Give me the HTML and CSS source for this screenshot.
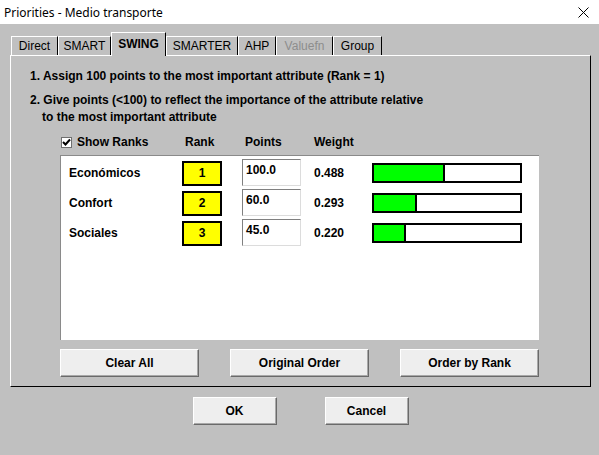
FILE: index.html
```html
<!DOCTYPE html>
<html>
<head>
<meta charset="utf-8">
<title>Priorities - Medio transporte</title>
<link rel="stylesheet" href="styles.css">
</head>
<body>
<div class="window">
  <div class="titlebar">
    <span class="title">Priorities - Medio transporte</span>
    <svg class="close" width="11" height="11" viewBox="0 0 11 11"><path d="M0.5 0.5 L10.5 10.5 M10.5 0.5 L0.5 10.5" stroke="#000" stroke-width="1" fill="none"/></svg>
  </div>
  <div class="main">
    <div class="tabs">
      <div class="tab t-direct">Direct</div>
      <div class="tab t-smart">SMART</div>
      <div class="tab t-swing selected">SWING</div>
      <div class="tab t-smarter">SMARTER</div>
      <div class="tab t-ahp">AHP</div>
      <div class="tab t-valuefn disabled">Valuefn</div>
      <div class="tab t-group">Group</div>
    </div>
    <div class="panel">
      <div class="instr l1">1. Assign 100 points to the most important attribute (Rank = 1)</div>
      <div class="instr l2">2. Give points (&lt;100) to reflect the importance of the attribute relative</div>
      <div class="instr l3">to the most important attribute</div>
      <div class="header">
        <label class="showranks"><span class="check"><svg width="9" height="9" viewBox="0 0 9 9"><path d="M1 4 L3.5 6.5 L8 1.5" stroke="#000" stroke-width="2" fill="none"/></svg></span>Show Ranks</label>
        <span class="h-rank">Rank</span>
        <span class="h-points">Points</span>
        <span class="h-weight">Weight</span>
      </div>
      <div class="list">
        <div class="row">
          <span class="name">Económicos</span>
          <span class="rank">1</span>
          <span class="points">100.0</span>
          <span class="weight">0.488</span>
          <span class="bar"><span class="fill" style="width:48.8%"></span></span>
        </div>
        <div class="row">
          <span class="name">Confort</span>
          <span class="rank">2</span>
          <span class="points">60.0</span>
          <span class="weight">0.293</span>
          <span class="bar"><span class="fill" style="width:29.3%"></span></span>
        </div>
        <div class="row">
          <span class="name">Sociales</span>
          <span class="rank">3</span>
          <span class="points">45.0</span>
          <span class="weight">0.220</span>
          <span class="bar"><span class="fill" style="width:22%"></span></span>
        </div>
      </div>
      <div class="actions">
        <button class="btn wide">Clear All</button>
        <button class="btn wide">Original Order</button>
        <button class="btn wide">Order by Rank</button>
      </div>
    </div>
    <div class="footer">
      <button class="btn small">OK</button>
      <button class="btn small">Cancel</button>
    </div>
  </div>
</div>
</body>
</html>
```
FILE: styles.css
```css
html, body {
  margin: 0;
  padding: 0;
  width: 599px;
  height: 455px;
  overflow: hidden;
  background: #c0c0c0;
  font-family: "Liberation Sans", Arial, sans-serif;
  font-size: 12px;
  color: #000;
}

.window {
  width: 599px;
  height: 455px;
}

.titlebar {
  height: 24px;
  background: #fff;
  display: flex;
  align-items: center;
  justify-content: space-between;
  padding: 0 10px 0 4px;
}

.title {
  font-family: "Noto Sans", sans-serif;
  font-size: 12px;
  color: #000;
}

.close {
  display: block;
}

.main {
  padding: 8px 8px 0 10px;
}

.tabs {
  display: flex;
  align-items: flex-end;
  height: 23px;
  padding-left: 1px;
}

.tab {
  box-sizing: border-box;
  height: 19px;
  border-top: 1px solid #fff;
  border-left: 1px solid #fff;
  border-right: 1px solid #000;
  display: flex;
  align-items: center;
  justify-content: center;
  background: #c0c0c0;
  white-space: nowrap;
}

.tab.selected {
  height: 24px;
  margin-bottom: -1px;
  font-weight: bold;
  position: relative;
  z-index: 2;
  padding-bottom: 2px;
}

.tab.disabled {
  color: #8d8d8d;
}

.t-direct { width: 47px; }
.t-smart { width: 53px; }
.t-swing { width: 55px; }
.t-smarter { width: 72px; }
.t-ahp { width: 38px; }
.t-valuefn { width: 57px; }
.t-group { width: 49px; }

.panel {
  box-sizing: border-box;
  width: 581px;
  height: 332px;
  border-top: 1px solid #fff;
  border-left: 1px solid #fff;
  border-right: 1px solid #000;
  border-bottom: 1px solid #000;
  padding-top: 12px;
  font-weight: bold;
}

.instr {
  line-height: 17px;
  padding-left: 19px;
  white-space: nowrap;
}

.l1 {
  margin-bottom: 7px;
}

.l3 {
  padding-left: 31px;
}

.header {
  margin-top: 8px;
  height: 17px;
  line-height: 17px;
  padding-left: 50px;
  display: grid;
  grid-template-columns: 121px 60px 72px 80px;
}

.showranks {
  display: flex;
  align-items: center;
}

.check {
  box-sizing: border-box;
  width: 11px;
  height: 11px;
  background: #fff;
  border: 1px solid #6f6f6f;
  margin-right: 5px;
  display: flex;
  align-items: center;
  justify-content: center;
}

.check svg {
  display: block;
}

.h-rank, .h-points {
  padding-left: 3px;
}

.list {
  box-sizing: border-box;
  margin: 4px 0 0 49px;
  width: 479px;
  height: 185px;
  background: #fff;
  border-top: 1px solid #8a8a8a;
  border-left: 1px solid #8a8a8a;
  padding: 2px 0 0 8px;
}

.row {
  height: 30px;
  display: grid;
  grid-template-columns: 113px 60px 72px 58px 150px;
  align-items: center;
  line-height: 17px;
}

.rank {
  box-sizing: border-box;
  width: 40px;
  height: 25px;
  background: #ffff00;
  border: 2px solid #000;
  display: flex;
  align-items: center;
  justify-content: center;
  padding-top: 1px;
}

.points {
  box-sizing: border-box;
  width: 59px;
  height: 27px;
  border-top: 1px solid #808080;
  border-left: 1px solid #808080;
  border-right: 1px solid #dcdcdc;
  border-bottom: 1px solid #dcdcdc;
  padding: 2px 3px 0;
  background: #fff;
  margin-top: -1px;
}

.bar {
  box-sizing: border-box;
  width: 150px;
  height: 20px;
  border: 2px solid #000;
  background: #fff;
  display: flex;
}

.fill {
  display: block;
  height: 100%;
  background: #00ff00;
  border-right: 2px solid #000;
  box-sizing: border-box;
}

.actions {
  margin: 9px 0 0 49px;
  display: flex;
  gap: 31px;
}

.btn {
  box-sizing: border-box;
  height: 28px;
  background: #eeeeee;
  border-style: solid;
  border-width: 1px;
  border-color: #fff #6a6a6a #6a6a6a #fff;
  box-shadow: inset -1px -1px 0 #a8a8a8;
  font-family: "Liberation Sans", Arial, sans-serif;
  font-size: 12px;
  font-weight: bold;
  color: #000;
  padding: 0;
  margin: 0;
}

.btn.wide {
  width: 139px;
}

.btn.small {
  width: 84px;
}

.footer {
  margin-top: 10px;
  display: flex;
  justify-content: center;
  gap: 48px;
}
```
